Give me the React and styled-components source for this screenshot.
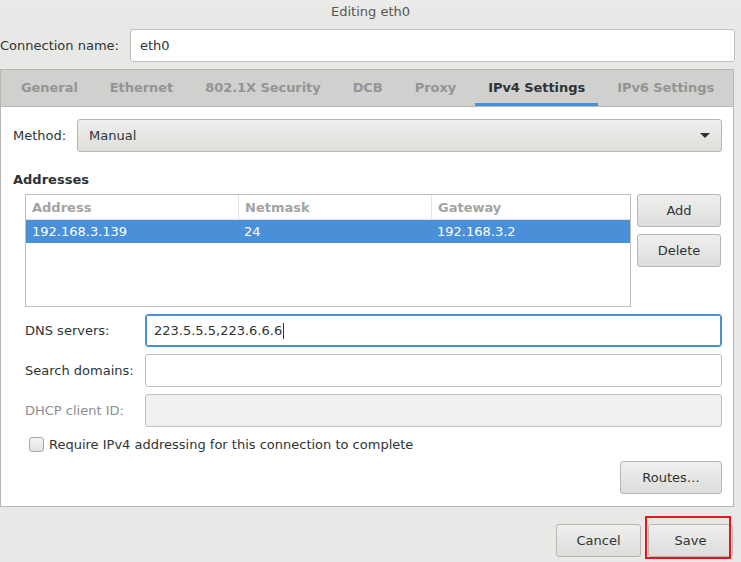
import styled, { createGlobalStyle } from "styled-components"

const GlobalStyle = createGlobalStyle`
  html, body {
    margin: 0;
    padding: 0;
    background: #e8e8e7;
  }
  body {
    font-family: "DejaVu Sans", "Liberation Sans", sans-serif;
    font-size: 13px;
    color: #2e3436;
  }
  * { box-sizing: border-box; }
`

const Dialog = styled.div`
  width: 741px;
  height: 562px;
  display: flex;
  flex-direction: column;
  background: #e8e8e7;
  overflow: hidden;
`

const TitleBar = styled.div`
  height: 22px;
  display: flex;
  align-items: center;
  justify-content: center;
  color: #555753;
  background: linear-gradient(#ececeb, #e6e6e5);
`

const NameRow = styled.div`
  display: flex;
  align-items: center;
  padding: 7px 6px 0 0;
`

const NameLabel = styled.span`
  width: 130px;
  flex-shrink: 0;
`

const Entry = styled.div`
  flex: 1;
  height: 33px;
  display: flex;
  align-items: center;
  padding: 0 8px;
  background: ${p => (p.disabled ? "#f0f0ef" : "#ffffff")};
  border: 1px solid ${p => (p.focused ? "#4a90d9" : "#bfbfbc")};
  box-shadow: ${p => (p.focused ? "inset 0 0 0 1px #4a90d9" : "none")};
  border-radius: 3px;
  color: #2e3436;
  white-space: nowrap;
`

const Caret = styled.span`
  display: inline-block;
  width: 1px;
  height: 16px;
  background: #2e3436;
  margin-left: 1px;
`

const Notebook = styled.div`
  margin-top: 7px;
  width: 734px;
  border: 1px solid #b6b6b3;
  display: flex;
  flex-direction: column;
`

const TabBar = styled.div`
  height: 37px;
  display: flex;
  padding-left: 4px;
  background: #d0d0ce;
  border-bottom: 1px solid #b6b6b3;
  overflow: hidden;
`

const Tab = styled.div`
  flex-shrink: 0;
  white-space: nowrap;
  margin: 0 3px;
  padding: 2px 13px 0;
  display: flex;
  align-items: center;
  font-weight: bold;
  letter-spacing: -0.06px;
  color: ${p => (p.active ? "#2e3436" : "#929595")};
  border-bottom: 3px solid ${p => (p.active ? "#4a90d9" : "transparent")};
`

const Page = styled.div`
  background: #ffffff;
  padding: 12px 11px 12px 12px;
  display: flex;
  flex-direction: column;
`

const MethodRow = styled.div`
  display: flex;
  align-items: center;
`

const MethodLabel = styled.span`
  width: 64px;
  flex-shrink: 0;
`

const Combo = styled.div`
  flex: 1;
  height: 33px;
  display: flex;
  align-items: center;
  justify-content: space-between;
  padding: 0 11px;
  border: 1px solid #b6b6b3;
  border-radius: 3px;
  background: linear-gradient(#eeeeec, #dededb);
`

const Arrow = styled.span`
  width: 0;
  height: 0;
  border-left: 5px solid transparent;
  border-right: 5px solid transparent;
  border-top: 5px solid #2e3436;
`

const Heading = styled.div`
  margin-top: 20px;
  font-weight: bold;
  line-height: 16px;
`

const Section = styled.div`
  margin-left: 12px;
  display: flex;
  flex-direction: column;
`

const AddrRow = styled.div`
  margin-top: 6px;
  display: flex;
  gap: 6px;
`

const Table = styled.div`
  width: 606px;
  height: 113px;
  border: 1px solid #bfbfbc;
  background: #ffffff;
`

const Row = styled.div`
  display: grid;
  grid-template-columns: 212px 193px 1fr;
  height: ${p => (p.header ? "25px" : "23px")};
  background: ${p => (p.selected ? "#4a90d9" : "transparent")};
  color: ${p => (p.selected ? "#ffffff" : "#2e3436")};
  border-bottom: ${p => (p.header ? "1px solid #e2e2e0" : "none")};
`

const Cell = styled.div`
  display: flex;
  align-items: center;
  padding-left: 6px;
  font-weight: ${p => (p.header ? "bold" : "normal")};
  color: ${p => (p.header ? "#a2a4a4" : "inherit")};
  border-left: ${p => (p.header && !p.first ? "1px solid #e2e2e0" : "none")};
`

const ButtonColumn = styled.div`
  display: flex;
  flex-direction: column;
  gap: 7px;
`

const Button = styled.div`
  width: ${p => p.w || 84}px;
  height: 33px;
  display: flex;
  align-items: center;
  justify-content: center;
  border: 1px solid #b6b6b3;
  border-radius: 3px;
  background: linear-gradient(#efefed, #dddddb);
  color: #2e3436;
`

const Fields = styled.div`
  margin-top: 7px;
  display: flex;
  flex-direction: column;
  gap: 7px;
`

const FieldRow = styled.div`
  display: flex;
  align-items: center;
`

const FieldLabel = styled.span`
  width: 120px;
  flex-shrink: 0;
  color: ${p => (p.disabled ? "#8b8e8f" : "#2e3436")};
`

const CheckRow = styled.div`
  margin-top: 9px;
  margin-left: 4px;
  display: flex;
  align-items: center;
  gap: 5px;
  height: 17px;
`

const CheckBox = styled.span`
  width: 15px;
  height: 15px;
  border: 1px solid #a8a8a5;
  border-radius: 3px;
  background: linear-gradient(#f4f4f3, #e2e2e0);
`

const RoutesRow = styled.div`
  margin-top: 8px;
  display: flex;
  justify-content: flex-end;
`

const ActionBar = styled.div`
  display: flex;
  justify-content: flex-end;
  gap: 7px;
  padding: 17px 8px 0 0;
`

const Highlight = styled.div`
  position: relative;
`

const RedBox = styled.div`
  position: absolute;
  left: -3px;
  top: -8px;
  width: 86px;
  height: 43px;
  border: 2px solid #e8141b;
  pointer-events: none;
`

const tabs = ["General", "Ethernet", "802.1X Security", "DCB", "Proxy", "IPv4 Settings", "IPv6 Settings"]

export default function App() {
  return (
    <Dialog>
      <GlobalStyle />
      <TitleBar>Editing eth0</TitleBar>
      <NameRow>
        <NameLabel>Connection name:</NameLabel>
        <Entry style={{ paddingLeft: 9 }}>eth0</Entry>
      </NameRow>
      <Notebook>
        <TabBar>
          {tabs.map(t => (
            <Tab key={t} active={t === "IPv4 Settings"}>{t}</Tab>
          ))}
        </TabBar>
        <Page>
          <MethodRow>
            <MethodLabel>Method:</MethodLabel>
            <Combo>
              <span>Manual</span>
              <Arrow />
            </Combo>
          </MethodRow>
          <Heading>Addresses</Heading>
          <Section>
            <AddrRow>
              <Table>
                <Row header>
                  <Cell header first>Address</Cell>
                  <Cell header>Netmask</Cell>
                  <Cell header>Gateway</Cell>
                </Row>
                <Row selected>
                  <Cell>192.168.3.139</Cell>
                  <Cell>24</Cell>
                  <Cell>192.168.3.2</Cell>
                </Row>
              </Table>
              <ButtonColumn>
                <Button>Add</Button>
                <Button>Delete</Button>
              </ButtonColumn>
            </AddrRow>
            <Fields>
              <FieldRow>
                <FieldLabel>DNS servers:</FieldLabel>
                <Entry focused>223.5.5.5,223.6.6.6<Caret /></Entry>
              </FieldRow>
              <FieldRow>
                <FieldLabel>Search domains:</FieldLabel>
                <Entry />
              </FieldRow>
              <FieldRow>
                <FieldLabel disabled>DHCP client ID:</FieldLabel>
                <Entry disabled />
              </FieldRow>
            </Fields>
            <CheckRow>
              <CheckBox />
              <span>Require IPv4 addressing for this connection to complete</span>
            </CheckRow>
            <RoutesRow>
              <Button w={102}>Routes…</Button>
            </RoutesRow>
          </Section>
        </Page>
      </Notebook>
      <ActionBar>
        <Button w={85}>Cancel</Button>
        <Highlight>
          <Button w={85}>Save</Button>
          <RedBox />
        </Highlight>
      </ActionBar>
    </Dialog>
  )
}
